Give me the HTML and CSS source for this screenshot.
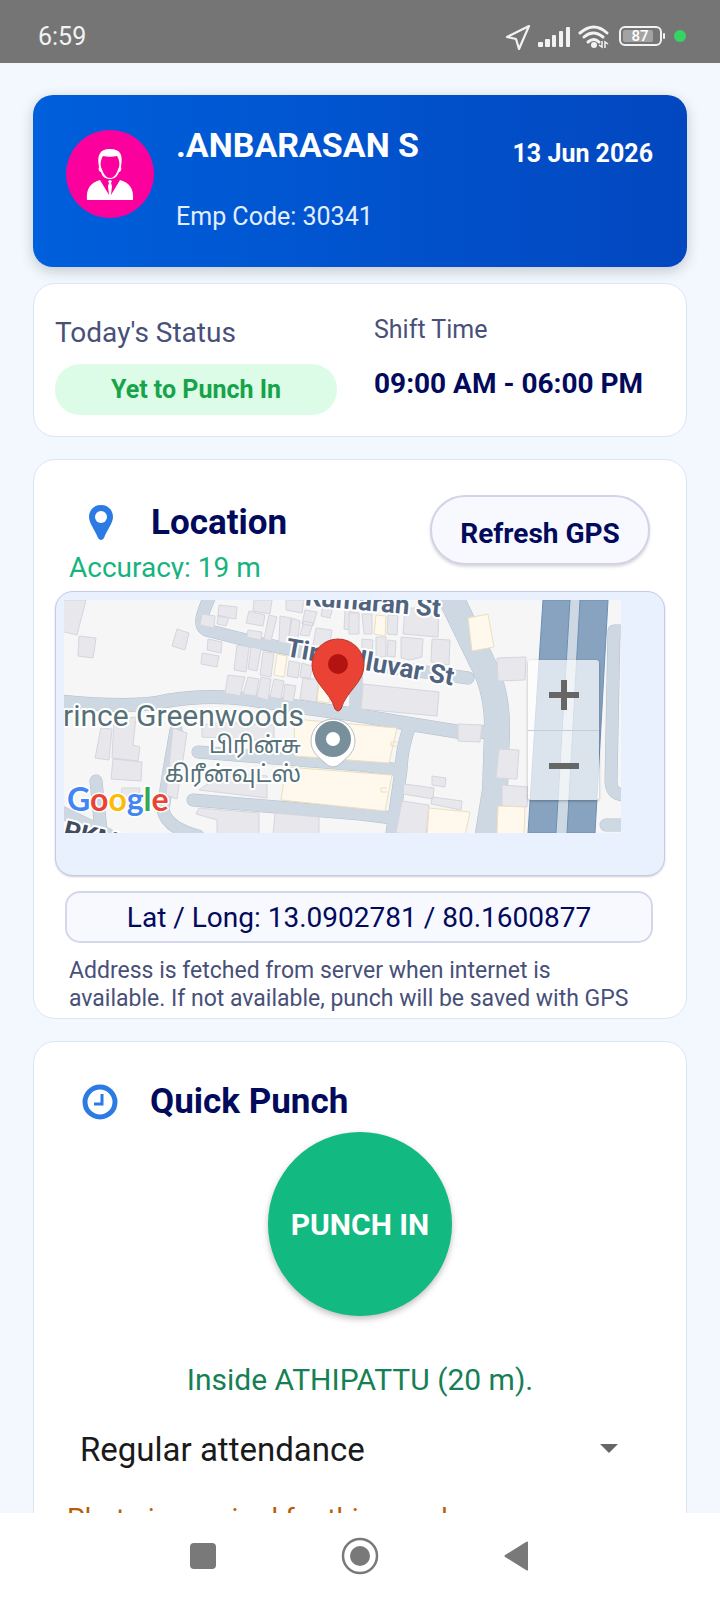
FILE: index.html
```html
<!DOCTYPE html>
<html lang="en">
<head>
	<meta charset="UTF-8">
	<meta name="viewport" content="width=device-width, initial-scale=1.0">
	<title>Attendance</title>
	<link rel="stylesheet" href="styles.css">
</head>
<body>
	<header class="status-bar">
		<span>6:59</span>
		<svg class="status-icons" viewBox="0 0 184 30" width="184" height="30" role="img" aria-label="Location on, signal, wifi, battery 87%">
			<path d="M25 4 3 15l9 2 3 10z" fill="none" stroke="#f2f2f2" stroke-width="2.2" stroke-linejoin="round"/>
			<g fill="#f2f2f2">
				<rect x="34" y="20" width="5" height="5" rx="1"/>
				<rect x="41" y="17" width="5" height="8" rx="1"/>
				<rect x="48" y="13" width="4" height="12" rx="1"/>
				<rect x="55" y="9" width="4" height="16" rx="1"/>
				<rect x="62" y="5" width="4" height="20" rx="1"/>
			</g>
			<g fill="none" stroke="#f2f2f2" stroke-width="3" stroke-linecap="round">
				<path d="M76 11q14-12 27 0"/>
				<path d="M80 15q9-8 19 0"/>
				<path d="M84 20q6-5 11 0"/>
			</g>
			<circle cx="90" cy="23" r="3" fill="#f2f2f2"/>
			<path d="M98 19v6l-3-2M101 26v-6l3 2" fill="none" stroke="#f2f2f2" stroke-width="1.5"/>
			<rect x="116" y="5" width="41" height="18" rx="5" fill="none" stroke="#f2f2f2" stroke-width="2"/>
			<rect x="119" y="8" width="30" height="12" rx="2" fill="#a3a3a3"/>
			<rect x="159" y="11" width="2" height="6" rx="1" fill="#f2f2f2"/>
			<text class="battery-text" x="136" y="19" text-anchor="middle">87</text>
			<circle cx="176" cy="14" r="6" fill="#35d465"/>
		</svg>
	</header>

	<main class="content">
		<section class="hero">
			<svg class="avatar" viewBox="0 0 88 88" width="88" height="88" aria-hidden="true">
				<circle cx="44" cy="44" r="44" fill="#fb009c"/>
				<path d="M33 37c-2-11 0-18 11-18s13 6 11 18c1 3-1 5-2 5-2 5-5 7-9 7s-8-2-9-7c-2 0-3-3-2-5z" fill="#fff"/>
				<path d="M35 37c-1-4 0-8 2-11 4 1 10 1 14 0 2 3 3 7 2 11l-2 5c-2 4-4 6-7 6s-5-2-7-6z" fill="#fb009c"/>
				<path d="M21 70c-1-11 3-17 13-20l9 15-1-9 1-3-1-2 2-1 2 1-1 2 1 3-1 9 9-15c10 3 14 9 13 20z" fill="#fff"/>
			</svg>
			<div class="hero-info">
				<h1>.ANBARASAN S</h1>
				<p>Emp Code: 30341</p>
			</div>
			<time class="hero-date" datetime="2026-06-13">13 Jun 2026</time>
		</section>

		<section class="card status-card">
			<div class="status-col">
				<p class="label-lg">Today's Status</p>
				<p class="pill">Yet to Punch In</p>
			</div>
			<div class="status-col">
				<p class="label">Shift Time</p>
				<p class="shift">09:00 AM - 06:00 PM</p>
			</div>
		</section>

		<section class="card location-card">
			<div class="location-head">
				<div>
					<div class="card-title">
						<svg viewBox="0 0 36 36" width="36" height="36" aria-hidden="true">
							<path d="M18 0C11 0 6 5 6 12c0 6 6 13 9 21q3 4 6 0c3-8 9-15 9-21 0-7-5-12-12-12z" fill="#2c7be5"/>
							<circle cx="18" cy="12" r="6" fill="#fff"/>
						</svg>
						<h2>Location</h2>
					</div>
					<p class="accuracy">Accuracy: 19 m</p>
				</div>
				<button class="refresh" type="button">Refresh GPS</button>
			</div>

			<div class="map-frame">
				<div class="map">
					<svg class="map-canvas" viewBox="0 0 557 233" preserveAspectRatio="xMidYMid slice" role="img" aria-label="Map of Prince Greenwoods">
						<rect width="557" height="233" fill="#f6f6f7"/>
						<!-- roads -->
						<g fill="none" stroke="#b4bfca" stroke-linecap="round" stroke-linejoin="round">
							<path d="M146-4C136 18 134 28 146 31L190 42 290 62 404 78" stroke-width="13"/>
							<path d="M-8 101q74 8 110 0 40-7 81-2l60 9 43 6 60 10 50 8h36" stroke-width="14"/>
							<path d="M384-8 418 62q16 30 15 70l-2 58-8 50" stroke-width="26"/>
							<path d="M346 126q-8 20-9 44l-10 70M134 152l162 13 40 5M129 200l167 14 32 4M112 130l-7 40-6 40q4 18 35 26M32 181l5 50M-5 211l50 24M292 70v40" stroke-width="13"/>
							<path d="M562 31h-12l-3 150q0 14 14 14M562 225h-20" stroke-width="13"/>
						</g>
						<g fill="none" stroke="#cdd8e2" stroke-linecap="round" stroke-linejoin="round">
							<path d="M146-4C136 18 134 28 146 31L190 42 290 62 404 78" stroke-width="12"/>
							<path d="M-8 101q74 8 110 0 40-7 81-2l60 9 43 6 60 10 50 8h36" stroke-width="13"/>
							<path d="M384-8 418 62q16 30 15 70l-2 58-8 50" stroke-width="25"/>
							<path d="M346 126q-8 20-9 44l-10 70M134 152l162 13 40 5M129 200l167 14 32 4M112 130l-7 40-6 40q4 18 35 26M32 181l5 50M-5 211l50 24M292 70v40" stroke-width="12"/>
							<path d="M562 31h-12l-3 150q0 14 14 14M562 225h-20" stroke-width="12"/>
						</g>
						<path d="M506 0h10l-13 233h-11z" fill="#cdd8e2"/>
						<path d="M479 0h27l-14 233h-28zM516 0h28l-13 233h-28z" fill="#88a3c0" stroke="#6b8fb5"/>
						<!-- buildings -->
						<g fill="#e7e7ec" stroke="#d5d6de">
							<path d="M-4 0h26l-9 35-17-4zM15 36l17 2-3 20-15-2zM113 29l12 4-4 17-13-4zM138 14l13 2-1 12-14-3zM155 5l18 2-1 12-18-3zM154 15l11 3-3 8-9-2zM144 39l14 3-1 11-14-3zM138 53l17 3-2 11-16-3z"/>
							<path d="M190 0h18l-2 14-17-3zM185 11l16 4-2 11-17-3zM184 30l14 2-1 8-14-3zM205 15l8 2-6 24-7-2zM216 16l11 2-3 26-9-2zM222 0h18l-2 13-16-3zM228 18l8 3-3 25-9-2zM241 10l12 2-4 14-11-2zM240 21l9 2-4 13-9-1zM252 28l16 2-3 19-16-4zM259 5l10 2-3 11-9-2zM281 10l14 3-1 18-14-2z"/>
							<path d="M173 45l12 2-3 25-12-2zM187 47l10 2-4 22-9-2zM199 52l11 1-3 24-11-2zM225 61l11 2-2 15-11-2zM238 63l10 3-2 14-10-3zM164 75l17 2-5 19-15-3zM184 77l11 2-3 17-13-2zM197 77l10 2-3 21-11-3zM210 79l10 2-3 18-11-2zM221 84l11 2-3 16-10-2zM239 77l16 3-3 22-16-3z"/>
							<path d="M285 13h10v21h-10zM298 14h10v20h-8zM324 15h10l-1 20-10-1zM341 8h34l-1 29-35-3zM298 39l11 1-1 15-10-2zM312 37h10v20h-10zM324 40l8 1-1 16-8-1zM337 37l22 2-1 18-12 3-9-2zM368 39l18 1-1 25-18-3zM299 84l76 8-2 24-76-7z"/>
							<path d="M394 124l24 1-2 17-22-1zM433 58l29-1-1 23-27 1zM435 149l20 1-2 29-21-1zM438 185l26 2-1 20-25-1zM368 176l14 2-1 9-13-2zM340 184l30 4-1 11-30-5zM368 197l30 4-1 9-30-6zM338 201l27 4-3 30-30-2z"/>
							<path d="M37 128l11 1-3 31-14-2zM50 120l22-3-3 28 7 2-2 14-26-3zM49 159l29 3-1 19-30-2zM109 128l14 5-10 66-11-4zM138 125l22-3 50 3v16l-72-4zM160 172l43 4v22l-68-8zM135 208l60 5v22h-42v-15l-21-6zM211 213l44 4v18h-46zM58 188h18l-3 22-17-6z"/>
						</g>
						<g fill="#fef9ec" stroke="#ecdfbd">
							<path d="M213 54l10 2-3 21-10-2zM255 82l14 2-4 19-12-2zM312 15l10 1-1 20-11-2zM404 18l20-4 6 33-22 4z"/>
							<path d="M230 119l103 9-8 35-94-7zM222 167l106 8-7 36-104-11zM365 208l41 4-5 24h-38zM434 206l27 1-1 28h-27z"/>
							<path d="M333 142h-6v4h6M323 188h-6v4h6" fill="none"/>
						</g>
						<!-- labels -->
						<g class="map-label">
							<text class="street" x="376" y="17" text-anchor="end" transform="rotate(5 376 17)">Kumaran St</text>
							<text class="street" x="221" y="56" transform="rotate(10 221 56)">Tiruvalluvar St</text>
							<text class="street dark" x="-2" y="238" transform="rotate(14 -2 238)">PKM Rd</text>
							<text class="place" x="240" y="126" text-anchor="end">Prince Greenwoods</text>
							<text class="tamil" x="237" y="153" text-anchor="end">பிரின்சு</text>
							<text class="tamil" x="237" y="182" text-anchor="end">கிரீன்வுட்ஸ்</text>
						</g>
						<text class="google" x="3" y="211"><tspan fill="#4285f4">G</tspan><tspan fill="#ea4335">o</tspan><tspan fill="#fbbc05">o</tspan><tspan fill="#4285f4">g</tspan><tspan fill="#34a853">l</tspan><tspan fill="#ea4335">e</tspan></text>
						<!-- place marker -->
						<path d="M269 119a22 22 0 0 0-22 22c0 10 6 15 14 22q8 8 16 0c8-7 14-12 14-22a22 22 0 0 0-22-22z" fill="#fff" stroke="#b9bec2"/>
						<circle cx="269" cy="139" r="18" fill="#78909c"/>
						<circle cx="269" cy="139" r="7" fill="#fff"/>
						<!-- current position -->
						<path d="M274 39a26 26 0 0 0-26 26c0 18 18 26 23 44q3 4 6 0c5-18 23-26 23-44a26 26 0 0 0-26-26z" fill="#ea4335" stroke="#b5382d"/>
						<circle cx="274" cy="64" r="10" fill="#b31412"/>
					</svg>
					<div class="zoom">
						<button type="button" aria-label="Zoom in"><svg viewBox="0 0 32 32" width="32" height="32"><path d="M13 1h6v12h12v6H19v12h-6V19H1v-6h12z" fill="#666"/></svg></button>
						<button type="button" aria-label="Zoom out"><svg viewBox="0 0 32 32" width="32" height="32"><path d="M1 13h30v6H1z" fill="#666"/></svg></button>
					</div>
				</div>
			</div>

			<p class="coords">Lat / Long: 13.0902781 / 80.1600877</p>
			<p class="address">Address is fetched from server when internet is available. If not available, punch will be saved with GPS</p>
		</section>

		<section class="card punch-card">
			<div class="card-title">
				<svg viewBox="0 0 36 36" width="36" height="36" aria-hidden="true">
					<circle cx="18" cy="18" r="15" fill="none" stroke="#2c7be5" stroke-width="5"/>
					<path d="M20 10v10h-8" fill="none" stroke="#2c7be5" stroke-width="3"/>
				</svg>
				<h2>Quick Punch</h2>
			</div>
			<button class="punch" type="button">PUNCH IN</button>
			<p class="geofence">Inside ATHIPATTU (20 m).</p>
			<div class="select-wrap">
				<select aria-label="Attendance type">
					<option>Regular attendance</option>
				</select>
			</div>
			<p class="photo-note">Photo is required for this punch</p>
		</section>
	</main>

	<nav class="nav-bar">
		<button type="button" aria-label="Recent apps"><svg viewBox="0 0 40 40" width="40" height="40"><rect x="7" y="7" width="26" height="26" rx="4" fill="#797979"/></svg></button>
		<button type="button" aria-label="Home"><svg viewBox="0 0 40 40" width="40" height="40"><circle cx="20" cy="20" r="17" fill="none" stroke="#797979" stroke-width="2.5"/><circle cx="20" cy="20" r="10" fill="#797979"/></svg></button>
		<button type="button" aria-label="Back"><svg viewBox="0 0 40 40" width="40" height="40"><path d="M31 6v28q0 1-2 0L8 21q-1-1 0-2L29 6q2-1 2 0z" fill="#797979"/></svg></button>
	</nav>
</body>
</html>
```
FILE: styles.css
```css
* {
	margin: 0;
	padding: 0;
	box-sizing: border-box;
}

body {
	font-family: Roboto, "Liberation Sans", sans-serif;
	background: #f3f8ff;
	color: #020a5c;
	height: 100vh;
	display: flex;
	flex-direction: column;
}

button {
	font-family: inherit;
	border: none;
	background: none;
	cursor: pointer;
}

svg {
	display: block;
	flex: none;
}

/* status bar */
.status-bar {
	flex: none;
	height: 63px;
	padding: 10px 32px 0 38px;
	background: #757575;
	color: #f2f2f2;
	font-size: 25px;
	display: flex;
	align-items: center;
	justify-content: space-between;
}

.battery-text {
	font-size: 15px;
	font-weight: 500;
	fill: #fff;
}

/* scrolling area */
.content {
	flex: 1;
	min-height: 0;
	overflow: hidden;
	padding: 32px 33px 0;
}

.hero {
	display: flex;
	height: 172px;
	padding: 26px 34px 0 33px;
	border-radius: 20px;
	background: linear-gradient(90deg, #005fdc, #0247bf);
	color: #fff;
	box-shadow: 0 4px 14px rgba(0,0,0,0.2);
}

.avatar {
	margin-top: 9px;
}

.hero-info {
	flex: 1;
	margin-left: 22px;
}

.hero h1 {
	font-size: 34px;
	line-height: 48px;
	font-weight: 700;
}

.hero-info p {
	margin-top: 32px;
	font-size: 25px;
	line-height: 32px;
	color: #e3eeff;
}

.hero-date {
	margin-top: 17px;
	font-size: 25px;
	line-height: 32px;
	font-weight: 700;
}

.card {
	background: #fff;
	border: 1px solid #dbe6f5;
	border-radius: 22px;
}

.status-card {
	display: grid;
	grid-template-columns: 282px 1fr;
	column-gap: 37px;
	height: 154px;
	margin-top: 16px;
	padding: 32px 21px 0;
}

.label-lg {
	font-size: 28px;
	line-height: 34px;
	color: #48507a;
}

.label {
	font-size: 25px;
	line-height: 28px;
	color: #48507a;
}

.pill {
	margin-top: 14px;
	border-radius: 25px;
	background: #dcfce7;
	color: #16a34a;
	font-size: 25px;
	line-height: 51px;
	font-weight: 700;
	text-align: center;
}

.shift {
	margin-top: 24px;
	font-size: 28px;
	line-height: 32px;
	font-weight: 700;
}

/* location */
.location-card {
	height: 560px;
	margin-top: 22px;
	padding: 35px 21px 0;
	overflow: hidden;
}

.location-head {
	display: flex;
	justify-content: space-between;
	height: 96px;
	padding: 0 15px 0 14px;
}

.card-title {
	display: flex;
	align-items: center;
	gap: 32px;
	padding: 6px 0 0 14px;
}

.card-title h2 {
	font-size: 35px;
	line-height: 44px;
	font-weight: 700;
}

.accuracy {
	height: 28px;
	margin-top: 6px;
	overflow: hidden;
	font-size: 28px;
	line-height: 34px;
	color: #17b37e;
}

.refresh {
	width: 220px;
	height: 70px;
	padding-top: 6px;
	border: 2px solid #d3d3e8;
	border-radius: 35px;
	background: #f8f9ff;
	color: #020a5c;
	font-size: 28px;
	font-weight: 700;
	box-shadow: 0 2px 3px rgba(0,0,0,0.15);
}

.map-frame {
	height: 285px;
	padding: 8px 43px 0 8px;
	border: 1px solid #c3cce4;
	border-radius: 18px;
	background: #e9f1ff;
	box-shadow: 0 1px 2px rgba(0,0,0,0.2);
}

.map {
	position: relative;
	height: 233px;
	overflow: hidden;
}

.map-canvas {
	width: 100%;
	height: 100%;
}

.map-label {
	fill: #567078;
	stroke: #fff;
	stroke-width: 4px;
	paint-order: stroke;
	stroke-linejoin: round;
}

.street {
	font-size: 26px;
	font-weight: 700;
	fill: #51647f;
}

.dark {
	fill: #404c60;
}

.place {
	font-size: 30px;
}

.tamil {
	font-family: "Noto Sans Tamil", "Noto Sans", sans-serif;
	font-size: 23px;
}

.google {
	font-family: Lato, sans-serif;
	font-size: 32px;
	font-weight: 700;
	stroke: #fff;
	stroke-width: 3px;
	paint-order: stroke;
}

.zoom {
	position: absolute;
	right: 22px;
	bottom: 33px;
	width: 71px;
	background: rgba(255,255,255,0.7);
	border-radius: 3px;
	box-shadow: 0 1px 3px rgba(0,0,0,0.3);
}

.zoom button {
	display: grid;
	place-items: center;
	width: 100%;
	height: 70px;
}

.zoom button + button {
	border-top: 1px solid #c5ced8;
}

.coords {
	margin: 15px 12px 0 10px;
	padding-top: 2px;
	border: 2px solid #d3d7ec;
	border-radius: 15px;
	background: #f8f9ff;
	font-size: 28px;
	line-height: 46px;
	text-align: center;
}

.address {
	margin: 14px 14px 0;
	font-size: 23px;
	line-height: 28px;
	color: #48507a;
}

/* punch */
.punch-card {
	margin-top: 22px;
	padding: 32px 33px 40px;
}

.punch-card .card-title {
	padding: 6px 0 0 15px;
}

.punch {
	display: block;
	width: 184px;
	height: 184px;
	margin: 8px auto 0;
	border-radius: 50%;
	background: #12b981;
	color: #fff;
	font-size: 30px;
	font-weight: 700;
	box-shadow: 0 3px 6px rgba(0,0,0,0.25);
}

.geofence {
	margin-top: 46px;
	font-size: 30px;
	line-height: 36px;
	text-align: center;
	color: #168055;
}

.select-wrap {
	position: relative;
	margin-top: 24px;
	padding: 0 13px;
}

.select-wrap select {
	width: 100%;
	height: 54px;
	border: none;
	background: none;
	appearance: none;
	font-family: inherit;
	font-size: 33px;
	color: #1a1a1a;
}

.select-wrap::after {
	content: "";
	position: absolute;
	right: 35px;
	top: 22px;
	border: 9px solid transparent;
	border-top-color: #666;
	border-bottom: none;
	pointer-events: none;
}

.photo-note {
	margin-top: 26px;
	font-size: 28px;
	line-height: 34px;
	color: #b45f06;
}

/* system navigation */
.nav-bar {
	flex: none;
	display: flex;
	justify-content: center;
	gap: 117px;
	height: 87px;
	padding-top: 23px;
	background: #fff;
}

.nav-bar button {
	height: 40px;
}
```
